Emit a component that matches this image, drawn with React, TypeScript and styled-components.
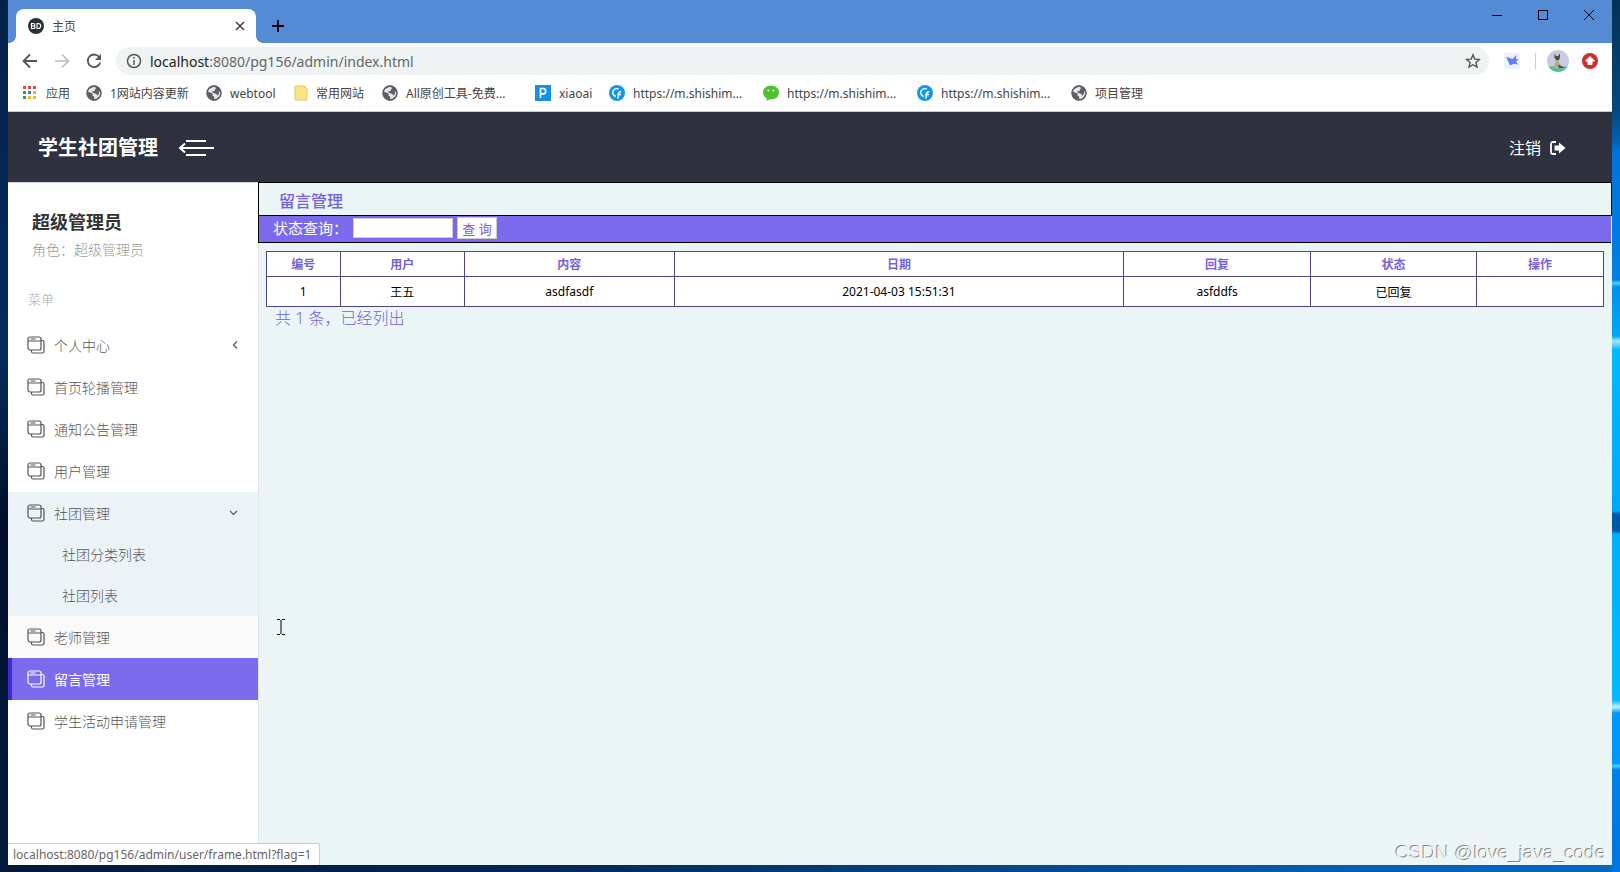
import React from "react";
import styled, { createGlobalStyle, css } from "styled-components";

const ui = `"Noto Sans", "Noto Sans CJK SC", sans-serif`;

const Global = createGlobalStyle`
  * { box-sizing: border-box; }
  body { margin: 0; font-family: ${ui}; font-size: 14px; }
  a { color: inherit; text-decoration: none; }
  button { border: 0; padding: 0; background: none; color: inherit; font: inherit; display: flex; align-items: center; justify-content: center; }
  ul { list-style: none; margin: 0; padding: 0; }
  h1, h2, p { margin: 0; }
`;

const Desktop = styled.div`
  min-height: 100vh;
  display: flex;
  padding: 0 8px 7px;
  background:
    linear-gradient(to bottom, #033257 0px, #04487c 110px, #0460b0 142px, #0072dc 150px, #0080e4 280px, #50d0f4 283px, #0090ea 287px, #00a8f4 336px, #a8e8fc 341px, #00b8fa 350px, #00a8f8 511px, #0058a8 514px, #0058a8 531px, #00b0f8 534px, #00b8fa 700px, #c0f0ff 707px, #0098f8 713px, #0098f8 763px, #40d0ff 766px, #0080e8 770px, #0074e0 872px) right top / 8px 100% no-repeat,
    linear-gradient(to right, #021a38 0%, #032450 30%, #044486 60%, #0560b4 85%, #0668c0 100%) left bottom / 100% 7px no-repeat,
    linear-gradient(to bottom, #03224a, #032c5c 40%, #010f2c 60%, #021c40);
`;

const BrowserWindow = styled.div`
  position: relative;
  flex: 1;
  min-width: 0;
  display: flex;
  flex-direction: column;
  background: #ebf5f6;
`;

const TitleBar = styled.div`
  height: 43px;
  background: #558bd4;
  display: flex;
  align-items: flex-end;
  padding-left: 8px;
`;

const Tab = styled.div`
  position: relative;
  width: 240px;
  height: 34px;
  padding: 0 10px 0 12px;
  border-radius: 8px 8px 0 0;
  background: #fff;
  display: flex;
  align-items: center;
  gap: 8px;
  font-size: 12px;
  color: #444;
  &::before, &::after {
    content: "";
    position: absolute;
    bottom: 0;
    width: 8px;
    height: 8px;
  }
  &::before { left: -8px; background: radial-gradient(circle at 0 0, transparent 8px, #fff 8px); }
  &::after { right: -8px; background: radial-gradient(circle at 100% 0, transparent 8px, #fff 8px); }
`;

const TabTitle = styled.span` flex: 1; `;

const NewTab = styled.button`
  width: 28px;
  height: 34px;
  margin-left: 8px;
`;

const WindowControls = styled.div`
  margin-left: auto;
  align-self: flex-start;
  display: flex;
`;

const ControlButton = styled.button`
  width: 46px;
  height: 30px;
`;

const Toolbar = styled.div`
  height: 36px;
  padding: 0 6px 0 12px;
  display: flex;
  align-items: center;
  background: #fff;
`;

const ToolButton = styled.button<{ $w?: number }>`
  width: ${(p) => p.$w ?? 32}px;
  height: 28px;
  flex: none;
`;

const NavButtons = styled.div`
  display: flex;
  width: 96px;
  margin-left: -6px;
`;

const AddressBar = styled.div`
  flex: 1;
  height: 28px;
  margin-left: 6px;
  border-radius: 14px;
  background: #f0f3f3;
  display: flex;
  align-items: center;
  gap: 8px;
  padding: 0 8px 0 10px;
  font-size: 14px;
  color: #666;
  b { font-weight: 400; color: #222; }
`;

const Url = styled.span` flex: 1; `;

const Divider = styled.span`
  width: 1px;
  height: 16px;
  margin-right: 6px;
  background: #ccc;
`;

const Bookmarks = styled.nav`
  height: 33px;
  padding: 0 14px 4px;
  display: flex;
  align-items: center;
  background: #fff;
  border-bottom: 1px solid #ccc;
  font-size: 12px;
  color: #444;
`;

const Bookmark = styled.a<{ $w: number }>`
  width: ${(p) => p.$w}px;
  display: flex;
  align-items: center;
  gap: 8px;
  white-space: nowrap;
  svg { flex: none; }
`;

const Header = styled.header`
  height: 70px;
  padding: 2px 46px 0 30px;
  display: flex;
  align-items: center;
  gap: 20px;
  background: #2f323e;
  color: #fff;
`;

const Brand = styled.h1`
  font-size: 20px;
  font-weight: 700;
  line-height: 28px;
`;

const Logout = styled.a`
  margin-left: auto;
  display: flex;
  align-items: center;
  gap: 9px;
  font-size: 16px;
  line-height: 24px;
`;

const Body = styled.div`
  flex: 1;
  display: flex;
`;

const Sidebar = styled.aside`
  width: 250px;
  flex: none;
  background: #fff;
  border-top: 1px solid #d4d8dc;
`;

const Profile = styled.div`
  padding: 26px 24px 0;
`;

const ProfileName = styled.h2`
  font-size: 18px;
  line-height: 26px;
  font-weight: 700;
  color: #333;
`;

const ProfileRole = styled.p`
  font-size: 14px;
  line-height: 30px;
  font-weight: 300;
  color: #999;
`;

const MenuLabel = styled.p`
  margin-top: 24px;
  padding: 0 20px;
  height: 35px;
  font-size: 13px;
  line-height: 20px;
  font-weight: 300;
  color: #aaa;
`;

const Submenu = styled.ul` background: #ebf3f6; `;

const MenuLink = styled.a<{ $active?: boolean; $open?: boolean; $hover?: boolean }>`
  height: 42px;
  padding: 0 18px 0 15px;
  border-left: 4px solid transparent;
  display: flex;
  align-items: center;
  gap: 9px;
  font-size: 14px;
  font-weight: 300;
  color: #555;
  background: ${(p) => (p.$open ? "#ebf3f6" : p.$hover ? "#fafafa" : "#fff")};
  ${(p) => p.$active && css`
    background: #7b6aeb;
    border-left-color: #4229d6;
    color: #fff;
    font-weight: 400;
  `}
`;

const MenuText = styled.span` flex: 1; `;

const SubLink = styled.a`
  display: block;
  height: 41px;
  line-height: 41px;
  padding-left: 54px;
  font-size: 14px;
  font-weight: 300;
  color: #555;
`;

const Content = styled.main`
  flex: 1;
  min-width: 0;
  border-left: 1px solid #dde5e8;
  background: #ebf5f6;
`;

const PageTitle = styled.h2`
  height: 34px;
  margin-left: -1px;
  padding: 0 20px;
  border: 1px solid #000;
  font-size: 16px;
  line-height: 36px;
  font-weight: 500;
  color: #7562d8;
`;

const SearchBar = styled.form`
  height: 27px;
  margin: 0 1px 0 -1px;
  padding: 0 14px 2px;
  border-left: 1px solid #000;
  border-bottom: 1px solid #000;
  background: #7b6aeb;
  color: #fff;
  display: flex;
  align-items: center;
  gap: 4px;
  font-size: 15px;
`;

const StateLabel = styled.label`
  width: 76px;
  line-height: 20px;
  white-space: nowrap;
  font-weight: 400;
`;

const StateInput = styled.input`
  width: 100px;
  height: 20px;
  border: 1px solid #ccc;
  background: #fff;
  font: inherit;
`;

const SearchButton = styled.button`
  width: 40px;
  height: 22px;
  background: #fff;
  border: 1px solid #ccc;
  color: #7562d8;
  font-size: 13px;
`;

const Records = styled.table`
  width: calc(100% - 15px);
  margin: 8px 8px 0 7px;
  border-collapse: collapse;
  table-layout: fixed;
  background: #fff;
  font-size: 12px;
  th, td {
    padding: 0;
    border: 1px solid #4b4585;
    text-align: center;
  }
  th { height: 25px; color: #7562d8; font-weight: 700; }
  td { height: 30px; color: #000; }
`;

const Summary = styled.p`
  padding: 0 16px;
  font-size: 16px;
  line-height: 22px;
  font-weight: 300;
  color: #7562d8;
`;

const StatusBubble = styled.div`
  position: absolute;
  left: 0;
  bottom: 0;
  height: 22px;
  padding: 0 8px 0 5px;
  border: 1px solid #ccc;
  border-width: 1px 1px 0 0;
  border-radius: 0 3px 0 0;
  background: #fff;
  font-size: 12px;
  line-height: 21px;
  color: #666;
`;

const Watermark = styled.div`
  position: absolute;
  right: 6px;
  bottom: 0;
  font-family: "Liberation Sans", sans-serif;
  font-size: 19px;
  line-height: 24px;
  color: #f4f4f4;
  text-shadow: -1px -1px 0 #888;
`;

const Caret = styled.svg`
  position: absolute;
  left: 268px;
  top: 618px;
`;

const line = { fill: "none", stroke: "currentColor" } as const;

const GlobeIcon = () => (
  <svg width="16" height="16" viewBox="0 0 16 16">
    <circle cx="8" cy="8" r="7.4" fill="#5c6064" />
    <path d="M6.5 2.2 9 1.8l1 1.6-1.2 1.4-.3 1.4H6.4l-.2 1.4 2 .6 2.5.8v1.5l1.6-.4 1-3.4 1-1 .3 1.5-1 4-3 2.5-2.2.4-.4-2.5-1.5-1.2v-2L3.8 7.5 1.8 6.6 3 4.2z" fill="#fff" opacity=".85" />
    <circle cx="8" cy="8" r="7" fill="none" stroke="#5c6064" strokeWidth="1.4" />
  </svg>
);

const AppsIcon = () => (
  <svg width="16" height="14" viewBox="-1 0 16 14">
    {["#d84b3f", "#d84b3f", "#d84b3f", "#3d9a50", "#3b79d8", "#e6b82c", "#3d9a50", "#e6b82c", "#e6b82c"].map((c, i) => (
      <rect key={i} x={(i % 3) * 5} y={Math.floor(i / 3) * 5} width="3" height="3" fill={c} />
    ))}
  </svg>
);

const FolderIcon = () => (
  <svg width="14" height="16" viewBox="0 0 14 16">
    <path d="M1 1h10v2h2v12H1z" fill="#fbe38a" stroke="#e6c95c" />
  </svg>
);

const LetterP = () => (
  <svg width="16" height="16" viewBox="0 0 16 16">
    <rect width="16" height="16" fill="#1690e4" />
    <path d="M5.5 13V3.5H8a2.6 2.6 0 0 1 0 5.4H5.5" fill="none" stroke="#fff" strokeWidth="1.6" />
  </svg>
);

const SwirlIcon = () => (
  <svg width="16" height="16" viewBox="0 0 16 16">
    <circle cx="8" cy="8" r="8" fill="#1296e8" />
    <path d="M9.800 4.200A4 4 0 1 0 6.800 11.500M8.500 13.500c1.200-1 .8-3 1-4.600.2-1.600 1.200-2.400 2.800-2M8 9.500h4" fill="none" stroke="#fff" strokeWidth="1.4" />
  </svg>
);

const ChatIcon = () => (
  <svg width="16" height="16" viewBox="0 0 16 16">
    <path d="M8 .5c4.600 0 8 3 8 7S12.600 14.500 8 14.500l-1.500-.1L3.500 15.800l.3-2.500C1.500 12.200 0 10 0 7.500c0-4 3.400-7 8-7z" fill="#4fc02f" />
    <circle cx="5.400" cy="5.600" r="1" fill="#fff" />
    <circle cx="10.400" cy="5.600" r="1" fill="#fff" />
  </svg>
);

const WindowsIcon = () => (
  <svg width="18" height="18" viewBox="0 0 18 18" {...line} strokeWidth="1.200">
    <rect x="1" y="1" width="13" height="13" rx="2" />
    <path d="M1 5h13M3.500 3h5M14 4.500h1.500A1.500 1.500 0 0 1 17 6v9.500a1.500 1.500 0 0 1-1.500 1.500H6a1.500 1.500 0 0 1-1.500-1.500V14" />
  </svg>
);

const bookmarks = [
  { label: "应用", icon: <AppsIcon />, w: 64 },
  { label: "1网站内容更新", icon: <GlobeIcon />, w: 120 },
  { label: "webtool", icon: <GlobeIcon />, w: 88 },
  { label: "常用网站", icon: <FolderIcon />, w: 88 },
  { label: "All原创工具-免费...", icon: <GlobeIcon />, w: 153 },
  { label: "xiaoai", icon: <LetterP />, w: 74 },
  { label: "https://m.shishim...", icon: <SwirlIcon />, w: 154 },
  { label: "https://m.shishim...", icon: <ChatIcon />, w: 154 },
  { label: "https://m.shishim...", icon: <SwirlIcon />, w: 154 },
  { label: "项目管理", icon: <GlobeIcon />, w: 90 },
];

type Item = { label: string; arrow?: "left" | "down"; active?: boolean; hover?: boolean; children?: string[] };

const menu: Item[] = [
  { label: "个人中心", arrow: "left" },
  { label: "首页轮播管理" },
  { label: "通知公告管理" },
  { label: "用户管理" },
  { label: "社团管理", arrow: "down", children: ["社团分类列表", "社团列表"] },
  { label: "老师管理", hover: true },
  { label: "留言管理", active: true },
  { label: "学生活动申请管理" },
];

const columns = [
  { title: "编号", value: "1", width: "5.5%" },
  { title: "用户", value: "王五", width: "9.3%" },
  { title: "内容", value: "asdfasdf", width: "15.7%" },
  { title: "日期", value: "2021-04-03 15:51:31", width: "33.6%" },
  { title: "回复", value: "asfddfs", width: "14%" },
  { title: "状态", value: "已回复", width: "12.4%" },
  { title: "操作", value: "", width: "9.5%" },
];

export default function App() {
  return (
    <Desktop>
      <Global />
      <BrowserWindow>
        <TitleBar>
          <Tab>
            <svg width="16" height="16" viewBox="0 0 16 16">
              <circle cx="8" cy="8" r="8" fill="#2c303b" />
              <path d="M3.500 5.500v5h2.200a1.200 1.200 0 0 0 0-2.500H3.500h2a1.200 1.200 0 0 0 0-2.500zM9 5.500v5h1.200a2.500 2.500 0 0 0 0-5z" fill="none" stroke="#fff" strokeWidth="1.200" />
            </svg>
            <TabTitle>主页</TabTitle>
            <button aria-label="关闭标签页">
              <svg width="12" height="12" viewBox="0 0 12 12" {...line} strokeWidth="1.600"><path d="m2 2 8 8M10 2l-8 8" /></svg>
            </button>
          </Tab>
          <NewTab aria-label="新标签页">
            <svg width="12" height="12" viewBox="0 0 12 12" {...line} strokeWidth="1.800"><path d="M6 0v12M0 6h12" /></svg>
          </NewTab>
          <WindowControls>
            <ControlButton aria-label="最小化"><svg width="12" height="12" {...line}><path d="M1 6.500h10" /></svg></ControlButton>
            <ControlButton aria-label="最大化"><svg width="12" height="12" {...line}><rect x="1.500" y="1.500" width="9" height="9" /></svg></ControlButton>
            <ControlButton aria-label="关闭"><svg width="12" height="12" {...line}><path d="m1 1 10 10M11 1 1 11" /></svg></ControlButton>
          </WindowControls>
        </TitleBar>

        <Toolbar>
          <NavButtons>
            <ToolButton aria-label="后退"><svg width="16" height="16" {...line} stroke="#555" strokeWidth="1.800"><path d="M15 8H2M8 1.500 1.500 8 8 14.500" /></svg></ToolButton>
            <ToolButton aria-label="前进"><svg width="16" height="16" {...line} stroke="#bbb" strokeWidth="1.600"><path d="M1 8h13M8 1.500 14.500 8 8 14.500" /></svg></ToolButton>
            <ToolButton aria-label="刷新">
              <svg width="16" height="16"><path d="M13.500 4.500A6.300 6.300 0 1 0 14.200 9.500" fill="none" stroke="#555" strokeWidth="1.800" /><path d="M15 1v6H9z" fill="#555" /></svg>
            </ToolButton>
          </NavButtons>
          <AddressBar>
            <svg width="16" height="16" {...line} stroke="#555" strokeWidth="1.500"><circle cx="8" cy="8" r="6.500" /><path d="M8 7v5M8 4v1.600" /></svg>
            <Url><b>localhost</b>:8080/pg156/admin/index.html</Url>
            <button aria-label="收藏">
              <svg width="16" height="16" viewBox="0 0 16 16" {...line} stroke="#555" strokeWidth="1.400"><path d="m8 1.800 1.800 4.300 4.600.4-3.500 3 1.100 4.600L8 11.700l-4 2.400 1.100-4.600-3.500-3 4.600-.4z" /></svg>
            </button>
          </AddressBar>
          <ToolButton aria-label="扩展程序" $w={46}>
            <svg width="16" height="16" viewBox="0 0 16 16"><rect width="16" height="16" fill="#eef0fc" /><path d="M2 3.800 8.500 6 12.500 2l-.5 4 3 .5-3 1.700 2 3.300-4.500-.7L6 12.500 5 10z" fill="#627cf2" /></svg>
          </ToolButton>
          <Divider />
          <ToolButton aria-label="用户">
            <svg width="22" height="22" viewBox="0 0 22 22">
              <circle cx="11" cy="11" r="11" fill="#c5cbe0" />
              <path d="M1.500 16.500h19a11 11 0 0 1-19 0z" fill="#47c2a0" />
              <path d="m7.500 3.500 1.500 2.500h2l2-2.500v4.500l-1.500 2.500h-2L7.500 8z" fill="#514c48" />
              <path d="M9 10h2.500l1 4 5 3.500v1H6.500z" fill="#b5a98c" />
              <path d="M11 14.500 18 18h-6z" fill="#514c48" />
            </svg>
          </ToolButton>
          <ToolButton aria-label="更新">
            <svg width="16" height="16" viewBox="0 0 16 16"><circle cx="8" cy="8" r="8" fill="#d12c28" /><path d="m8 3.500 4.500 4.500H10v3.500H6V8H3.500z" fill="#fff" stroke="#fff" strokeLinejoin="round" /></svg>
          </ToolButton>
        </Toolbar>

        <Bookmarks>
          {bookmarks.map((b, i) => <Bookmark key={i} href="#" $w={b.w}>{b.icon}{b.label}</Bookmark>)}
        </Bookmarks>

        <Header>
          <Brand>学生社团管理</Brand>
          <button aria-label="收起菜单">
            <svg width="36" height="18" viewBox="0 0 36 18" {...line} strokeWidth="2"><path d="M8 2h20M2 9h34M8 16h20M7 4.500 2 9l5 4.500" /></svg>
          </button>
          <Logout href="#">
            注销
            <svg width="16" height="14" viewBox="0 0 16 14" fill="currentColor"><path d="M6 1H3a2 2 0 0 0-2 2v8a2 2 0 0 0 2 2h3" fill="none" stroke="currentColor" strokeWidth="1.800" /><path d="M9 1.500 15.500 7 9 12.500V9.500H4.500v-5H9z" /></svg>
          </Logout>
        </Header>

        <Body>
          <Sidebar>
            <Profile>
              <ProfileName>超级管理员</ProfileName>
              <ProfileRole>角色：超级管理员</ProfileRole>
            </Profile>
            <MenuLabel>菜单</MenuLabel>
            <ul>
              {menu.map((m) => (
                <li key={m.label}>
                  <MenuLink href="#" $active={m.active} $open={!!m.children} $hover={m.hover}>
                    <WindowsIcon />
                    <MenuText>{m.label}</MenuText>
                    {m.arrow && (
                      <svg width="10" height="10" {...line} strokeWidth="1.200">
                        <path d={m.arrow === "left" ? "M7 1.500 3.500 5 7 8.500" : "M0 3 3.500 6.500 7 3"} />
                      </svg>
                    )}
                  </MenuLink>
                  {m.children && (
                    <Submenu>
                      {m.children.map((c) => <li key={c}><SubLink href="#">{c}</SubLink></li>)}
                    </Submenu>
                  )}
                </li>
              ))}
            </ul>
          </Sidebar>

          <Content>
            <PageTitle>留言管理</PageTitle>
            <SearchBar onSubmit={(e) => e.preventDefault()}>
              <StateLabel htmlFor="state">状态查询：</StateLabel>
              <StateInput id="state" type="text" />
              <SearchButton type="submit">查 询</SearchButton>
            </SearchBar>
            <Records>
              <colgroup>{columns.map((c) => <col key={c.title} width={c.width} />)}</colgroup>
              <thead><tr>{columns.map((c) => <th key={c.title} scope="col">{c.title}</th>)}</tr></thead>
              <tbody><tr>{columns.map((c) => <td key={c.title}>{c.value}</td>)}</tr></tbody>
            </Records>
            <Summary>共 1 条，已经列出</Summary>
          </Content>
        </Body>

        <StatusBubble>localhost:8080/pg156/admin/user/frame.html?flag=1</StatusBubble>
        <Caret width="10" height="18" {...line} stroke="#000"><path d="M1 1.500h3M6 1.500h3M5 2v14M1 16.500h3M6 16.500h3" /></Caret>
        <Watermark>CSDN @love_java_code</Watermark>
      </BrowserWindow>
    </Desktop>
  );
}
